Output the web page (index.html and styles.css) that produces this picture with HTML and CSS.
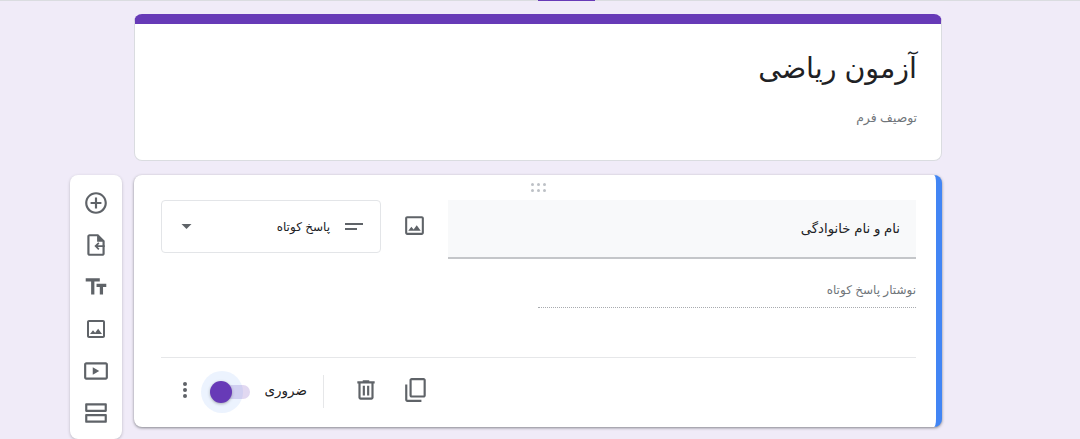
FILE: index.html
```html
<!DOCTYPE html>
<html lang="fa">
<head>
<meta charset="utf-8">
<title>آزمون ریاضی</title>
<link rel="stylesheet" href="styles.css">
</head>
<body>
<header class="topline"><span class="tab-mark"></span></header>
<main class="canvas">
  <section class="card title-card">
    <h1 class="form-title" dir="rtl">آزمون ریاضی</h1>
    <p class="form-desc" dir="rtl">توصیف فرم</p>
  </section>
  <div class="question-row">
    <nav class="toolbar">
      <button class="tool"><svg viewBox="0 0 24 24"><path d="M13 7h-2v4H7v2h4v4h2v-4h4v-2h-4V7zm-1-5C6.480 2 2 6.480 2 12s4.480 10 10 10 10-4.480 10-10S17.520 2 12 2zm0 18c-4.410 0-8-3.590-8-8s3.590-8 8-8 8 3.590 8 8-3.590 8-8 8z"/></svg></button>
      <button class="tool"><svg viewBox="0 0 24 24"><path d="M14 2H6c-1.100 0-2 .9-2 2v16c0 1.100.9 2 2 2h12c1.100 0 2-.9 2-2V8l-6-6zm4 18H6V4h7v5h5v11z"/><path d="M20 12.200v1.600h-6.400l1.600 1.600-1.100 1.100-3.600-3.500 3.600-3.500 1.100 1.100-1.600 1.600z"/></svg></button>
      <button class="tool"><svg viewBox="0 0 24 24"><path d="M2.500 4v3h5v12h3V7h5V4h-13zm19 5h-9v3h3v7h3v-7h3V9z"/></svg></button>
      <button class="tool img-tool"><svg viewBox="0 0 24 24"><path d="M19 5v14H5V5h14m0-2H5c-1.100 0-2 .9-2 2v14c0 1.100.9 2 2 2h14c1.100 0 2-.9 2-2V5c0-1.100-.9-2-2-2zm-4.860 8.860l-3 3.870L9 13.140 6 17h12l-3.860-5.140z"/></svg></button>
      <button class="tool"><svg viewBox="0 0 24 24"><path d="M21 4H3c-1.100 0-2 .9-2 2v12c0 1.100.9 2 2 2h18c1.100 0 2-.9 2-2V6c0-1.100-.9-2-2-2zm0 14H3V6h18v12z"/><path d="M9 8.500v7l6-3.500z"/></svg></button>
      <button class="tool"><svg viewBox="0 0 24 24"><path d="M21 3H3c-.6 0-1 .4-1 1v6c0 .6.4 1 1 1h18c.6 0 1-.4 1-1V4c0-.6-.4-1-1-1zm-1 6H4V5h16v4zM21 13H3c-.6 0-1 .4-1 1v6c0 .6.4 1 1 1h18c.6 0 1-.4 1-1v-6c0-.6-.4-1-1-1zm-1 6H4v-4h16v4z"/></svg></button>
    </nav>
    <section class="card question-card">
      <div class="drag"><i></i><i></i><i></i><i></i><i></i><i></i></div>
      <div class="q-head">
        <div class="type-select">
          <svg class="caret" viewBox="0 0 10 5"><path d="M0 0l5 5 5-5z"/></svg>
          <span class="type-label" dir="rtl">پاسخ کوتاه</span>
          <svg class="lines" viewBox="0 0 18 7"><path d="M0 0h18v2H0zM0 5h12v2H0z"/></svg>
        </div>
        <button class="img-btn"><svg viewBox="0 0 24 24"><path d="M19 5v14H5V5h14m0-2H5c-1.100 0-2 .9-2 2v14c0 1.100.9 2 2 2h14c1.100 0 2-.9 2-2V5c0-1.100-.9-2-2-2zm-4.860 8.860l-3 3.870L9 13.140 6 17h12l-3.860-5.140z"/></svg></button>
        <div class="q-title" dir="rtl">نام و نام خانوادگی</div>
      </div>
      <div class="answer" dir="rtl">نوشتار پاسخ کوتاه</div>
      <footer class="q-foot">
        <button class="more"><i></i><i></i><i></i></button>
        <span class="switch"><span class="track"></span><span class="halo"></span><span class="knob"></span></span>
        <span class="req" dir="rtl">ضروری</span>
        <span class="vsep"></span>
        <button class="foot-btn trash"><svg viewBox="0 0 24 24"><path d="M15 4V3H9v1H4v2h1v13c0 1.100.9 2 2 2h10c1.100 0 2-.9 2-2V6h1V4h-5zm2 15H7V6h10v13z"/><path d="M9 8h2v9H9zM13 8h2v9h-2z"/></svg></button>
        <button class="foot-btn copy"><svg viewBox="0 0 24 24"><path d="M19 1H8c-1.100 0-2 .9-2 2v14c0 1.100.9 2 2 2h11c1.100 0 2-.9 2-2V3c0-1.100-.9-2-2-2zm0 16H8V3h11v14z"/><path d="M2 7v14c0 1.100.9 2 2 2h13v-2H4V7z"/></svg></button>
      </footer>
    </section>
  </div>
</main>
</body>
</html>
```
FILE: styles.css
```css
* { box-sizing: border-box; }
html, body { margin: 0; height: 439px; overflow: hidden; }
body {
  background: #f0ebf8;
  font-family: "Liberation Sans", "DejaVu Sans", sans-serif;
  color: #202124;
}
button { border: 0; background: none; padding: 0; display: flex; align-items: center; justify-content: center; }
svg { display: block; fill: #5f6368; }

.topline { height: 1px; background: #dadce0; display: flex; justify-content: center; }
.tab-mark { width: 57px; height: 1px; background: #673ab7; margin-left: 53px; flex: none; }

.canvas { padding: 13px 0 0 70px; }
.card { background: #fff; border-radius: 8px; }

.title-card {
  margin-left: 64px;
  width: 808px;
  height: 147px;
  border: 1px solid #dadce0;
  border-top: 10px solid #673ab7;
  padding: 24px 24px 0;
}
.form-title { margin: 0; font-size: 28.500px; font-weight: 400; line-height: 40px; }
.form-desc { margin: 21px 0 0; font-size: 12.400px; line-height: 18px; color: #70757a; }

.question-row { display: flex; align-items: flex-start; gap: 12px; margin-top: 14px; }

.toolbar {
  width: 52px;
  height: 264px;
  flex: none;
  background: #fff;
  border-radius: 8px;
  padding-top: 7px;
  box-shadow: 0 1px 3px rgba(60, 64, 67, .3);
  display: flex;
  flex-direction: column;
}
.tool { height: 42px; width: 52px; flex: none; }
.tool svg { width: 26px; height: 26px; }
.img-tool svg { width: 24px; height: 24px; }

.question-card {
  width: 808px;
  height: 252px;
  border-right: 6px solid #4285f4;
  padding: 25px 20px 0 27px;
  box-shadow: 0 1px 3px rgba(60, 64, 67, .6);
  position: relative;
  display: flex;
  flex-direction: column;
}
.drag {
  position: absolute;
  left: 397px;
  top: 8px;
  display: grid;
  grid-template-columns: repeat(3, 3px);
  gap: 3px 3px;
}
.drag i { width: 3px; height: 3px; border-radius: 50%; background: #bdc1c6; }

.q-head { display: flex; align-items: flex-start; }
.type-select {
  width: 220px;
  height: 53px;
  border: 1px solid #e3e5e8;
  border-radius: 4px;
  display: flex;
  align-items: center;
  padding: 0 17px 0 19px;
}
.caret { width: 11px; height: 5px; }
.type-label { margin-left: auto; font-size: 12px; color: #202124; }
.lines { width: 18px; height: 7px; margin-left: 15px; }
.img-btn { width: 67px; height: 50px; }
.img-btn svg { width: 25px; height: 25px; }
.q-title {
  width: 468px;
  height: 59px;
  background: #f8f9fa;
  border-bottom: 2px solid #c4c6c9;
  padding: 20px 16px 0;
  font-size: 13.300px;
  line-height: 18px;
  color: #202124;
  text-align: right;
}

.answer {
  width: 378px;
  margin: 22px 0 0 377px;
  height: 27px;
  border-bottom: 1px dotted #a8abaf;
  font-size: 12px;
  line-height: 18px;
  color: #70757a;
}

.q-foot {
  margin-top: 49px;
  height: 69px;
  border-top: 1px solid #e6e7e9;
  display: flex;
  align-items: center;
  padding-bottom: 1px;
}
.more { width: 6px; height: 20px; margin: 0 0 3px 21px; flex-direction: column; gap: 2px; }
.more i { width: 4px; height: 4px; border-radius: 50%; background: #5f6368; flex: none; }
.switch { position: relative; width: 28px; height: 14px; margin-left: 34px; }
.track { position: absolute; inset: 0; border-radius: 7px; background: #e1d8f1; }
.halo { position: absolute; left: -21px; top: -14px; width: 42px; height: 42px; border-radius: 50%; background: rgba(66, 133, 244, .1); }
.knob { position: absolute; left: -12px; top: -4px; width: 22px; height: 22px; border-radius: 50%; background: #673ab7; box-shadow: 0 1px 3px rgba(60, 64, 67, .4); }
.req { margin: 0 0 3px 13px; width: 44px; font-size: 13.500px; text-align: right; color: #202124; white-space: nowrap; }
.vsep { width: 1px; height: 33px; background: #e6e7e9; margin-left: 16px; }
.foot-btn svg { width: 26px; height: 26px; }
.foot-btn { margin-bottom: 3px; }
.trash { margin-left: 29px; width: 26px; }
.copy { margin-left: 24px; width: 26px; }
```
